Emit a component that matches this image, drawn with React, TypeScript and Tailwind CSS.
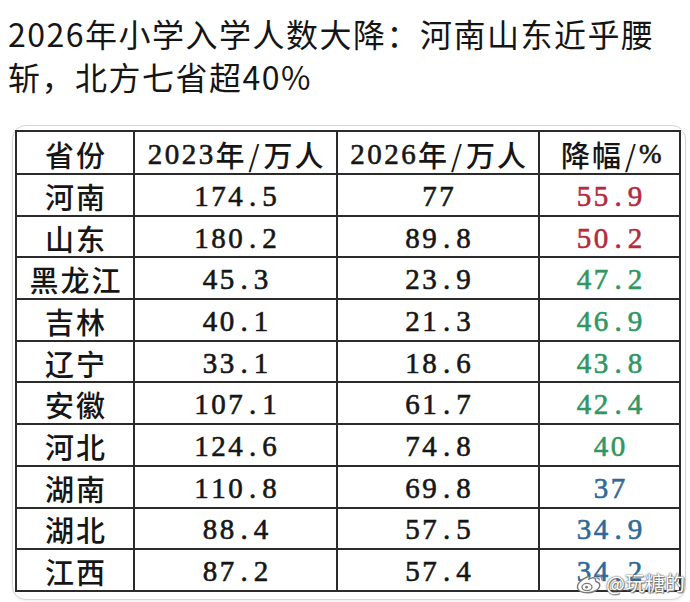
import React from "react";

type Row = [string, string, string, string, string];

const rows: Row[] = [
  ["河南", "174.5", "77", "55.9", "r"],
  ["山东", "180.2", "89.8", "50.2", "r"],
  ["黑龙江", "45.3", "23.9", "47.2", "g"],
  ["吉林", "40.1", "21.3", "46.9", "g"],
  ["辽宁", "33.1", "18.6", "43.8", "g"],
  ["安徽", "107.1", "61.7", "42.4", "g"],
  ["河北", "124.6", "74.8", "40", "g"],
  ["湖南", "110.8", "69.8", "37", "b"],
  ["湖北", "88.4", "57.5", "34.9", "b"],
  ["江西", "87.2", "57.4", "34.2", "b"],
];

const colorOf: Record<string, string> = {
  r: "text-[#b52a3c]",
  g: "text-[#2f9763]",
  b: "text-[#2f6a98]",
};

function Glyphs({ text, h }: { text: string; h: string }) {
  return (
    <div className={"flex items-center justify-center whitespace-nowrap pt-[3px] " + h}>
      {Array.from(text).map((c, i) =>
        /[0-9.]/.test(c) ? (
          <span
            key={i}
            className="inline-block w-[17px] text-center font-['Liberation_Serif',serif] text-[29px] leading-none [-webkit-text-stroke:0.6px_currentColor]"
          >
            {c}
          </span>
        ) : c === "/" ? (
          <span
            key={i}
            className="inline-block w-[17px] text-center font-['Noto_Sans_CJK_SC',sans-serif] text-[29px] leading-none"
          >
            /
          </span>
        ) : c === "%" ? (
          <span
            key={i}
            className="inline-block w-[20px] text-center font-['Liberation_Serif',serif] text-[27px] leading-none [-webkit-text-stroke:0.6px_currentColor]"
          >
            %
          </span>
        ) : (
          <span
            key={i}
            className="inline-block w-[31px] text-center font-['Noto_Sans_CJK_SC',sans-serif] text-[29px] font-medium leading-none"
          >
            {c}
          </span>
        )
      )}
    </div>
  );
}

const td = "border-2 border-[#2b2b2b] text-center align-middle p-0 font-normal";

function WeiboLogo() {
  return (
    <svg width="30" height="22" viewBox="0 0 30 22">
      <path
        d="M12 5 C5 8 1 13 3 17 C5 21 14 22 20 19 C26 16 26 11 22 10 C20 9.5 20.5 8 20.5 7 C20 5 17 5.5 14 7 C14.5 5 14 4 12 5 Z"
        fill="#ffffff"
        stroke="#7a7a7a"
        strokeWidth="1.4"
      />
      <ellipse cx="12" cy="15" rx="5" ry="3.6" fill="none" stroke="#7a7a7a" strokeWidth="1.3" />
      <circle cx="11.5" cy="15.2" r="1.4" fill="#7a7a7a" />
      <path d="M22 3 C25 3 27 5 27 8" fill="none" stroke="#8a8a8a" strokeWidth="1.4" strokeLinecap="round" />
      <path d="M22 6 C23.5 6 24.3 7 24.3 8" fill="none" stroke="#8a8a8a" strokeWidth="1.3" strokeLinecap="round" />
    </svg>
  );
}

export default function App() {
  return (
    <div className="relative w-[690px] h-[602px] bg-white overflow-hidden text-[#161616]">
      <div className="pl-[8px] pt-[12px] font-['Noto_Sans_CJK_SC',sans-serif] text-[32px] leading-[43px] tracking-[1.5px] text-[#151515]">
        <div>2026年小学入学人数大降：河南山东近乎腰</div>
        <div>斩，北方七省超40%</div>
      </div>
      <div className="mt-[27px] ml-[12px] mr-[4px] rounded-[14px] border border-[#d6d6d6] bg-white pl-[2px] pt-[4px] pr-[6px] pb-[7px] shadow-[0_1px_3px_rgba(0,0,0,0.08)]">
        <table className="table-fixed border-collapse w-[664px]">
          <colgroup>
            <col className="w-[118px]" />
            <col className="w-[203px]" />
            <col className="w-[202px]" />
            <col className="w-[141px]" />
          </colgroup>
          <thead>
            <tr>
              <th className={td}>
                <Glyphs text="省份" h="h-[41px]" />
              </th>
              <th className={td}>
                <Glyphs text="2023年/万人" h="h-[41px]" />
              </th>
              <th className={td}>
                <Glyphs text="2026年/万人" h="h-[41px]" />
              </th>
              <th className={td}>
                <Glyphs text="降幅/%" h="h-[41px]" />
              </th>
            </tr>
          </thead>
          <tbody>
            {rows.map((r) => (
              <tr key={r[0]}>
                <td className={td}>
                  <Glyphs text={r[0]} h="h-[39.7px]" />
                </td>
                <td className={td}>
                  <Glyphs text={r[1]} h="h-[39.7px]" />
                </td>
                <td className={td}>
                  <Glyphs text={r[2]} h="h-[39.7px]" />
                </td>
                <td className={td + " " + colorOf[r[4]]}>
                  <Glyphs text={r[3]} h="h-[39.7px]" />
                </td>
              </tr>
            ))}
          </tbody>
        </table>
      </div>
      <div className="absolute right-[5px] bottom-[8px] flex items-center gap-[1px]">
        <WeiboLogo />
        <span className="font-['Noto_Sans_CJK_SC',sans-serif] text-[20px] leading-[22px] text-white [text-shadow:0_0_1px_#555,0_0_2px_#666,1px_1px_1px_#777]">
          @玩糖的
        </span>
      </div>
    </div>
  );
}
